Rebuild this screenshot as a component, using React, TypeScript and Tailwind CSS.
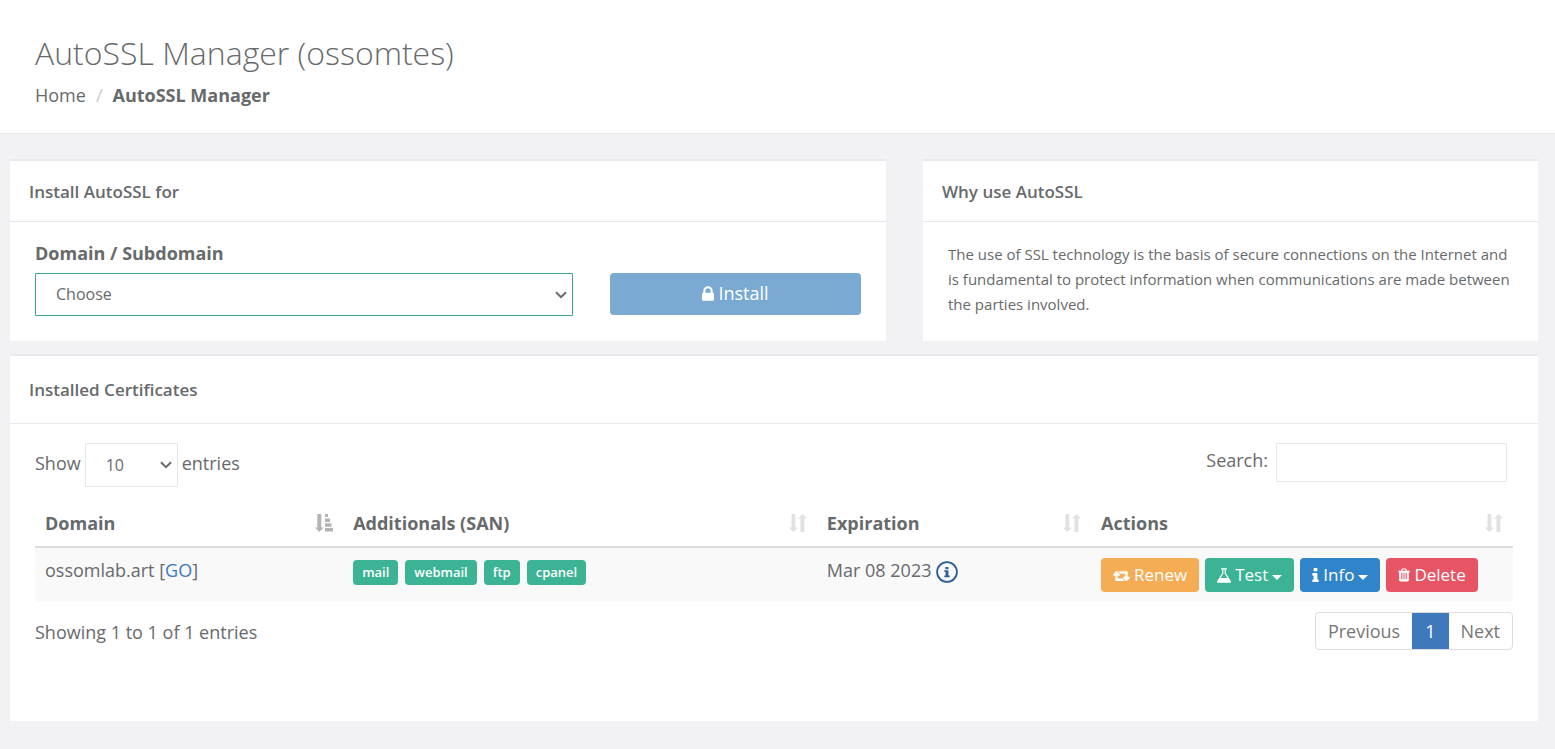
import type { ReactNode } from "react";

type IconProps = { className?: string };

function LockIcon({ className }: IconProps) {
  return (
    <svg viewBox="320 128 1152 1408" fill="currentColor" className={className} aria-hidden="true">
      <path d="M640 768h512v-192q0-106-75-181t-181-75-181 75-75 181v192zm832 96v576q0 40-28 68t-68 28h-960q-40 0-68-28t-28-68v-576q0-40 28-68t68-28h32v-192q0-184 132-316t316-132 316 132 132 316v192h32q40 0 68 28t28 68z" />
    </svg>
  );
}

function RetweetIcon({ className }: IconProps) {
  return (
    <svg viewBox="0 0 1920 1280" fill="currentColor" stroke="currentColor" strokeWidth="50" className={className} aria-hidden="true">
      <path d="M1280 1248q0 13-9.500 22.500t-22.500 9.500h-960q-8 0-13.500-2t-9-7-5.500-8-3-11.500-1-11.500v-600h-192q-26 0-45-19t-19-45q0-24 15-41l320-384q19-22 49-22t49 22l320 384q15 17 15 41 0 26-19 45t-45 19h-192v384h576q16 0 25 11l160 192q7 10 7 21zM1920 864q0 24-15 41l-320 384q-20 23-49 23t-49-23l-320-384q-15-17-15-41 0-26 19-45t45-19h192v-384h-576q-16 0-25-12l-160-192q-7-9-7-20 0-13 9.500-22.500t22.500-9.500h960q8 0 13.500 2t9 7 5.500 8 3 11.500 1 11.500v600h192q26 0 45 19t19 45z" />
    </svg>
  );
}

function FlaskIcon({ className }: IconProps) {
  return (
    <svg viewBox="160 128 1472 1536" fill="currentColor" className={className} aria-hidden="true">
      <path d="M1591 1448q56 89 21.500 152.500t-140.500 63.500h-1152q-106 0-140.500-63.500t21.500-152.500l503-793v-399h-64q-26 0-45-19t-19-45 19-45 45-19h512q26 0 45 19t19 45-19 45-45 19h-64v399zm-779-725l-272 429h712l-272-429-20-31v-436h-128v436z" />
    </svg>
  );
}

function InfoIcon({ className }: IconProps) {
  return (
    <svg viewBox="576 128 640 1408" fill="currentColor" className={className} aria-hidden="true">
      <path d="M1216 1344v128q0 26-19 45t-45 19h-512q-26 0-45-19t-19-45v-128q0-26 19-45t45-19h64v-384h-64q-26 0-45-19t-19-45v-128q0-26 19-45t45-19h384q26 0 45 19t19 45v576h64q26 0 45 19t19 45zm-128-1152v192q0 26-19 45t-45 19h-256q-26 0-45-19t-19-45v-192q0-26 19-45t45-19h256q26 0 45 19t19 45z" />
    </svg>
  );
}

function TrashIcon({ className }: IconProps) {
  return (
    <svg viewBox="192 128 1408 1536" fill="currentColor" className={className} aria-hidden="true">
      <path d="M704 1376v-704q0-14-9-23t-23-9h-64q-14 0-23 9t-9 23v704q0 14 9 23t23 9h64q14 0 23-9t9-23zm256 0v-704q0-14-9-23t-23-9h-64q-14 0-23 9t-9 23v704q0 14 9 23t23 9h64q14 0 23-9t9-23zm256 0v-704q0-14-9-23t-23-9h-64q-14 0-23 9t-9 23v704q0 14 9 23t23 9h64q14 0 23-9t9-23zm-544-992h448l-48-117q-7-9-17-11h-317q-10 2-17 11zm928 32v64q0 14-9 23t-23 9h-96v948q0 83-47 143.500t-113 60.500h-832q-66 0-113-58.500t-47-141.500v-952h-96q-14 0-23-9t-9-23v-64q0-14 9-23t23-9h309l70-167q15-37 54-63t79-26h320q40 0 79 26t54 63l70 167h309q14 0 23 9t9 23z" />
    </svg>
  );
}

function CaretIcon() {
  return (
    <svg viewBox="0 0 10 5" fill="currentColor" className="mt-1 h-[5px] w-[10px]" aria-hidden="true">
      <path d="M0 0h10L5 5z" />
    </svg>
  );
}

function ChevronIcon() {
  return (
    <svg
      viewBox="0 0 12 8"
      fill="none"
      stroke="currentColor"
      strokeWidth="2"
      className="pointer-events-none absolute top-1/2 right-[6px] h-2 w-3 -translate-y-1/2"
      aria-hidden="true"
    >
      <path d="M1 1.200l5 5 5-5" />
    </svg>
  );
}

function CircledInfoIcon({ className }: IconProps) {
  return (
    <svg viewBox="0 0 22 22" className={className} aria-hidden="true">
      <circle cx="11" cy="11" r="9.900" fill="none" stroke="currentColor" strokeWidth="1.800" />
      <path d="M9.400 6h3v2.300h-3zM8.400 9.300h4v5.200h1.300v1.700H8.300v-1.700h1.300V11H8.400z" fill="currentColor" />
    </svg>
  );
}

function SortedIcon() {
  return (
    <svg viewBox="0 0 18 18" fill="currentColor" className="h-[18px] w-[18px] text-[#b3b4b5]" aria-hidden="true">
      <path d="M2.300 0h4v13.500h2.500L4.300 18 0 13.500h2.300zM10 0h3v3h-3zM10 4.500h5v3.500h-5zM10 9.300h6.500v3.400H10zM10 14h8v3.500h-8z" />
    </svg>
  );
}

function UnsortedIcon() {
  return (
    <svg viewBox="0 0 18 18" fill="currentColor" className="h-[18px] w-[18px] text-[#e1e1e2]" aria-hidden="true">
      <path d="M2.500 0h3.800v13.500H9L4.400 18 0 13.500h2.500zM11.500 18h3.800V4.500H18L13.500 0 9 4.500h2.500z" />
    </svg>
  );
}

function Panel({ title, tall, children }: { title: string; tall?: boolean; children: ReactNode }) {
  return (
    <section className="border-t-2 border-[#e7eaec] bg-white">
      <h2
        className={
          tall
            ? "flex h-[68px] items-center border-b border-[#e7eaec] px-[19px] pt-px text-[17px] font-semibold"
            : "flex h-[61px] items-center border-b border-[#e7eaec] px-[19px] pt-[2px] text-[17px] font-semibold"
        }
      >
        {title}
      </h2>
      {children}
    </section>
  );
}

const columns = [
  { label: "Domain", width: "w-[20.85%]", sorted: true },
  { label: "Additionals (SAN)", width: "w-[32.05%]", sorted: false },
  { label: "Expiration", width: "w-[18.55%]", sorted: false },
  { label: "Actions", width: "w-[28.55%]", sorted: false },
];

const additionals = ["mail", "webmail", "ftp", "cpanel"];

const actionClass = "flex h-[34px] items-center gap-1 rounded-[4px] px-3 text-[17px] text-white";

const selectClass = "block w-full appearance-none rounded-[1px] border bg-white px-5 text-[16px]";

export default function App() {
  return (
    <div className="min-h-screen bg-[#f2f2f4] font-['Open_Sans',sans-serif] text-[18px] leading-[26px] text-[#676a6c]">
      <header className="border-b border-[#e7eaec] bg-white px-[35px] pt-[33px] pb-[25px]">
        <h1 className="text-[32px] leading-[40px] font-light">AutoSSL Manager (ossomtes)</h1>
        <nav aria-label="Breadcrumb" className="mt-[9px]">
          <ol className="flex">
            <li>
              <a href="#home">Home</a>
            </li>
            <li className="px-[10px] text-[#cccccc]" aria-hidden="true">/</li>
            <li className="font-bold">AutoSSL Manager</li>
          </ol>
        </nav>
      </header>

      <main className="pt-[25px] pr-[17px] pb-7 pl-[10px]">
        <div className="grid grid-cols-[876fr_615fr] gap-[37px]">
          <Panel title="Install AutoSSL for">
            <form className="grid grid-cols-[538fr_251fr] gap-x-[37px] px-[25px] pt-[18px] pb-[25px]">
              <label htmlFor="domain" className="col-span-2 mb-[7px] font-bold">Domain / Subdomain</label>
              <div className="relative">
                <select id="domain" className={`${selectClass} h-[43px] border-[#3aa789] pb-[2px]`}>
                  <option>Choose</option>
                </select>
                <ChevronIcon />
              </div>
              <button
                type="button"
                className="flex h-[42px] items-center justify-center gap-1 rounded-[4px] bg-[#7aa9d2] pb-[2px] text-white"
              >
                <LockIcon className="h-[15px] w-[12px]" />
                Install
              </button>
            </form>
          </Panel>
          <Panel title="Why use AutoSSL">
            <p className="px-[25px] pt-[20px] text-[15px] leading-[25px]">
              The use of SSL technology is the basis of secure connections on the Internet and is fundamental to
              protect information when communications are made between the parties involved.
            </p>
          </Panel>
        </div>

        <div className="mt-[13px]">
          <Panel title="Installed Certificates" tall>
            <div className="px-[25px] pt-[19px] pb-[71px]">
              <div className="flex items-start justify-between pr-[6px]">
                <div className="flex items-start gap-1">
                  <label htmlFor="length" className="pt-[7px]">Show</label>
                  <div className="relative w-[93px]">
                    <select id="length" className={`${selectClass} h-[44px] border-[#e5e6e7]`}>
                      <option>10</option>
                    </select>
                    <ChevronIcon />
                  </div>
                  <span className="pt-[7px]">entries</span>
                </div>
                <div className="flex items-start gap-2">
                  <label htmlFor="search" className="pt-1">Search:</label>
                  <input
                    id="search"
                    type="search"
                    className="h-[39px] w-[231px] rounded-[1px] border border-[#e5e6e7] bg-white px-3 text-[16px]"
                  />
                </div>
              </div>

              <table className="mt-[13px] w-full table-fixed border-collapse text-left">
                <thead>
                  <tr className="h-[47px] border-b-2 border-[#dddddd]">
                    {columns.map((column) => (
                      <th key={column.label} scope="col" className={`${column.width} px-[10px] font-bold`}>
                        <span className="flex items-center justify-between">
                          {column.label}
                          {column.sorted ? <SortedIcon /> : <UnsortedIcon />}
                        </span>
                      </th>
                    ))}
                  </tr>
                </thead>
                <tbody>
                  <tr className="h-[55px] bg-[#f9f9f9] align-top">
                    <td className="px-[10px] pt-[9px]">
                      ossomlab.art [<a href="#go" className="text-[#3d79bb]">GO</a>]
                    </td>
                    <td className="px-[10px] pt-[12px]">
                      <div className="flex gap-[7px]">
                        {additionals.map((name) => (
                          <span
                            key={name}
                            className="rounded-[4px] bg-[#3bb394] px-[9px] text-[13px] leading-[25px] font-semibold text-white"
                          >
                            {name}
                          </span>
                        ))}
                      </div>
                    </td>
                    <td className="px-[10px] pt-[9px]">
                      <div className="flex items-end gap-1">
                        Mar 08 2023
                        <CircledInfoIcon className="h-[22px] w-[22px] text-[#2f5e94]" />
                      </div>
                    </td>
                    <td className="px-[10px] pt-[10px]">
                      <div className="flex gap-[6px]">
                        <button type="button" className={`${actionClass} bg-[#f5ad55]`}>
                          <RetweetIcon className="h-[11px] w-[17px]" />
                          Renew
                        </button>
                        <button type="button" className={`${actionClass} bg-[#3bb394]`}>
                          <FlaskIcon className="h-[15px] w-[14px]" />
                          Test
                          <CaretIcon />
                        </button>
                        <button type="button" className={`${actionClass} bg-[#3084ca]`}>
                          <InfoIcon className="h-[14px] w-[7px]" />
                          Info
                          <CaretIcon />
                        </button>
                        <button type="button" className={`${actionClass} bg-[#e75565]`}>
                          <TrashIcon className="h-[14px] w-[12px]" />
                          Delete
                        </button>
                      </div>
                    </td>
                  </tr>
                </tbody>
              </table>

              <div className="mt-[10px] flex items-center justify-between">
                <p className="pt-[2px]">Showing 1 to 1 of 1 entries</p>
                <nav aria-label="Pages" className="flex h-[38px] rounded-[4px] border border-[#dddddd] leading-[36px]">
                  <a href="#previous" className="px-[12px] text-[#777777]">Previous</a>
                  <a href="#page-1" aria-current="page" className="bg-[#3d79bb] px-[13px] text-white">1</a>
                  <a href="#next" className="px-[12px] text-[#777777]">Next</a>
                </nav>
              </div>
            </div>
          </Panel>
        </div>
      </main>
    </div>
  );
}
